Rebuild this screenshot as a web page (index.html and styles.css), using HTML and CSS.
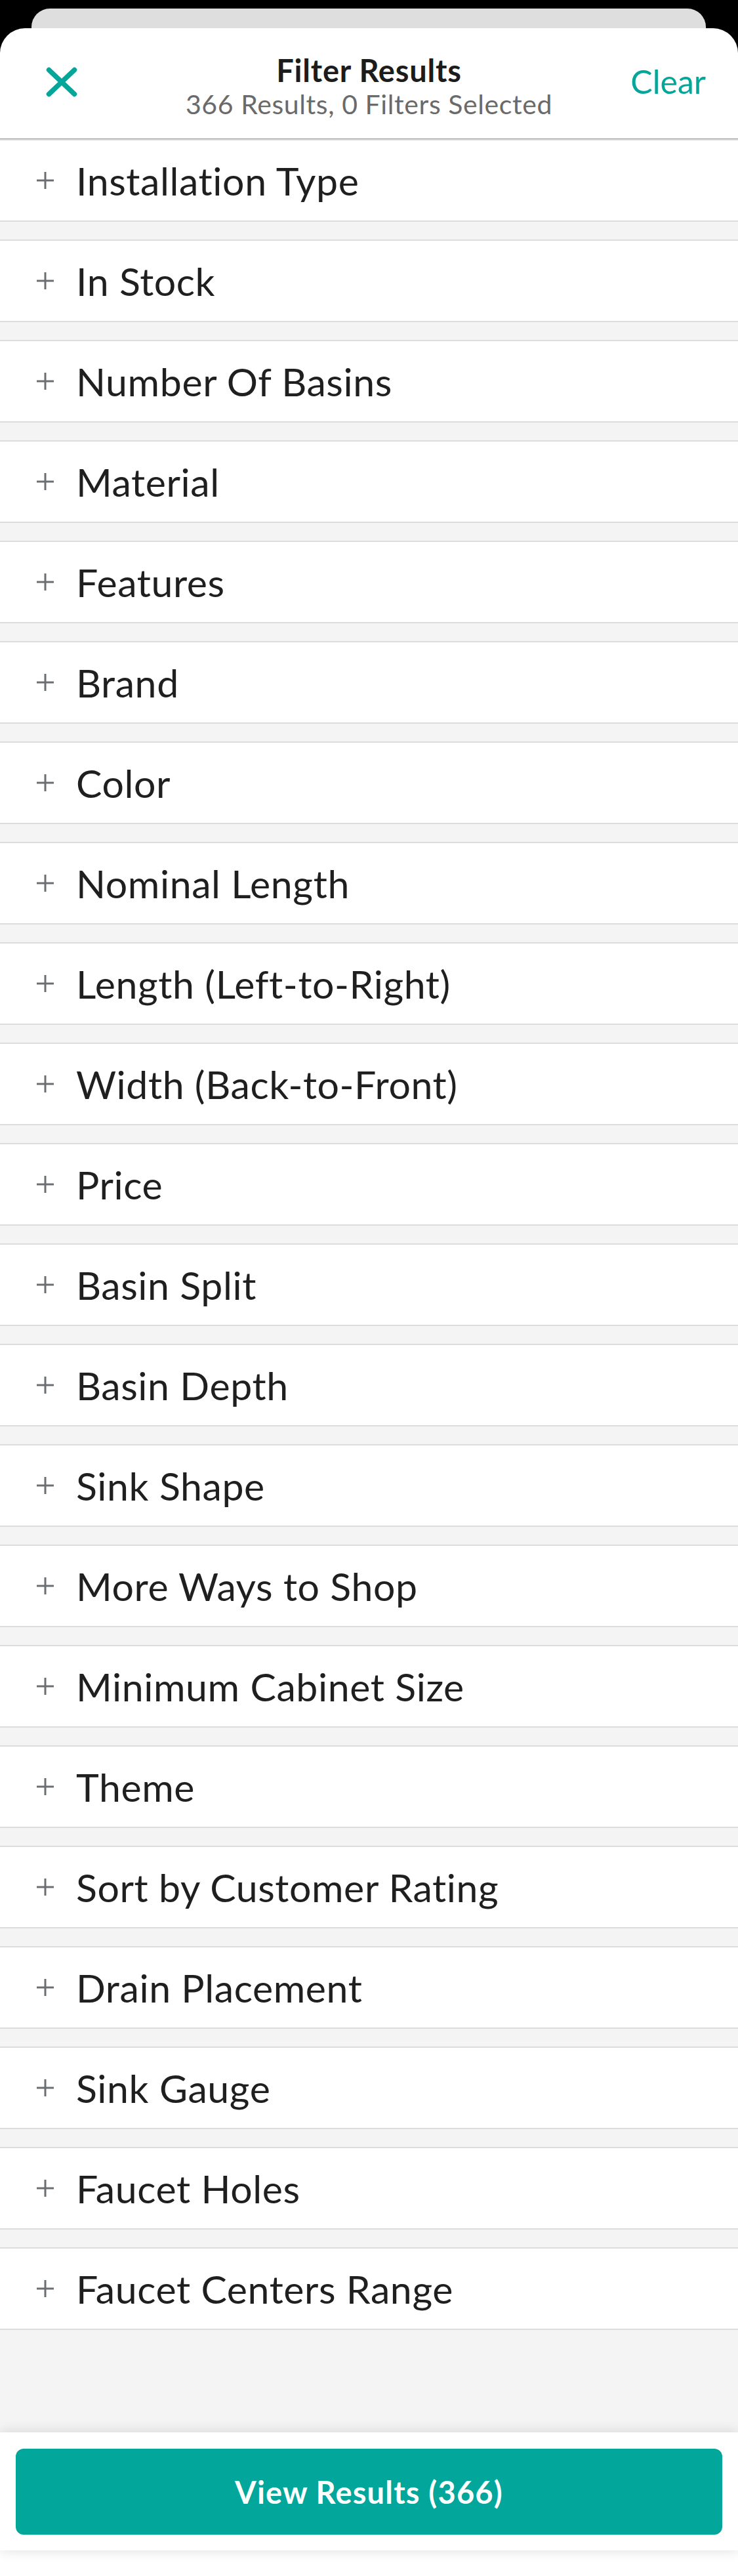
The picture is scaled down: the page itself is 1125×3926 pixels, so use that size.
FILE: index.html
```html
<!DOCTYPE html>
<html lang="en">
<head>
<meta charset="utf-8">
<title>Filter Results</title>
<link rel="stylesheet" href="styles.css">
</head>
<body>
<div class="screen">
  <div class="back-card"></div>
  <div class="sheet">
    <header class="sheet-header">
      <button class="close" aria-label="Close">
        <svg width="48" height="46" viewBox="0 0 48 46"><path d="M4.5 4.5 L43.5 41.5 M43.5 4.5 L4.5 41.5" stroke="#04a69a" stroke-width="7.5" stroke-linecap="round" fill="none"/></svg>
      </button>
      <div class="title-block">
        <div class="title">Filter Results</div>
        <div class="subtitle">366 Results, 0 Filters Selected</div>
      </div>
      <button class="clear">Clear</button>
    </header>
    <ul class="filters">
      <li class="filter"><svg class="plus" width="26" height="26" viewBox="0 0 26 26"><path d="M0 13 H26 M13 0 V26" stroke="#6b6e72" stroke-width="3"/></svg><span>Installation Type</span></li>
      <li class="filter"><svg class="plus" width="26" height="26" viewBox="0 0 26 26"><path d="M0 13 H26 M13 0 V26" stroke="#6b6e72" stroke-width="3"/></svg><span>In Stock</span></li>
      <li class="filter"><svg class="plus" width="26" height="26" viewBox="0 0 26 26"><path d="M0 13 H26 M13 0 V26" stroke="#6b6e72" stroke-width="3"/></svg><span>Number Of Basins</span></li>
      <li class="filter"><svg class="plus" width="26" height="26" viewBox="0 0 26 26"><path d="M0 13 H26 M13 0 V26" stroke="#6b6e72" stroke-width="3"/></svg><span>Material</span></li>
      <li class="filter"><svg class="plus" width="26" height="26" viewBox="0 0 26 26"><path d="M0 13 H26 M13 0 V26" stroke="#6b6e72" stroke-width="3"/></svg><span>Features</span></li>
      <li class="filter"><svg class="plus" width="26" height="26" viewBox="0 0 26 26"><path d="M0 13 H26 M13 0 V26" stroke="#6b6e72" stroke-width="3"/></svg><span>Brand</span></li>
      <li class="filter"><svg class="plus" width="26" height="26" viewBox="0 0 26 26"><path d="M0 13 H26 M13 0 V26" stroke="#6b6e72" stroke-width="3"/></svg><span>Color</span></li>
      <li class="filter"><svg class="plus" width="26" height="26" viewBox="0 0 26 26"><path d="M0 13 H26 M13 0 V26" stroke="#6b6e72" stroke-width="3"/></svg><span>Nominal Length</span></li>
      <li class="filter"><svg class="plus" width="26" height="26" viewBox="0 0 26 26"><path d="M0 13 H26 M13 0 V26" stroke="#6b6e72" stroke-width="3"/></svg><span>Length (Left-to-Right)</span></li>
      <li class="filter"><svg class="plus" width="26" height="26" viewBox="0 0 26 26"><path d="M0 13 H26 M13 0 V26" stroke="#6b6e72" stroke-width="3"/></svg><span>Width (Back-to-Front)</span></li>
      <li class="filter"><svg class="plus" width="26" height="26" viewBox="0 0 26 26"><path d="M0 13 H26 M13 0 V26" stroke="#6b6e72" stroke-width="3"/></svg><span>Price</span></li>
      <li class="filter"><svg class="plus" width="26" height="26" viewBox="0 0 26 26"><path d="M0 13 H26 M13 0 V26" stroke="#6b6e72" stroke-width="3"/></svg><span>Basin Split</span></li>
      <li class="filter"><svg class="plus" width="26" height="26" viewBox="0 0 26 26"><path d="M0 13 H26 M13 0 V26" stroke="#6b6e72" stroke-width="3"/></svg><span>Basin Depth</span></li>
      <li class="filter"><svg class="plus" width="26" height="26" viewBox="0 0 26 26"><path d="M0 13 H26 M13 0 V26" stroke="#6b6e72" stroke-width="3"/></svg><span>Sink Shape</span></li>
      <li class="filter"><svg class="plus" width="26" height="26" viewBox="0 0 26 26"><path d="M0 13 H26 M13 0 V26" stroke="#6b6e72" stroke-width="3"/></svg><span>More Ways to Shop</span></li>
      <li class="filter"><svg class="plus" width="26" height="26" viewBox="0 0 26 26"><path d="M0 13 H26 M13 0 V26" stroke="#6b6e72" stroke-width="3"/></svg><span>Minimum Cabinet Size</span></li>
      <li class="filter"><svg class="plus" width="26" height="26" viewBox="0 0 26 26"><path d="M0 13 H26 M13 0 V26" stroke="#6b6e72" stroke-width="3"/></svg><span>Theme</span></li>
      <li class="filter"><svg class="plus" width="26" height="26" viewBox="0 0 26 26"><path d="M0 13 H26 M13 0 V26" stroke="#6b6e72" stroke-width="3"/></svg><span>Sort by Customer Rating</span></li>
      <li class="filter"><svg class="plus" width="26" height="26" viewBox="0 0 26 26"><path d="M0 13 H26 M13 0 V26" stroke="#6b6e72" stroke-width="3"/></svg><span>Drain Placement</span></li>
      <li class="filter"><svg class="plus" width="26" height="26" viewBox="0 0 26 26"><path d="M0 13 H26 M13 0 V26" stroke="#6b6e72" stroke-width="3"/></svg><span>Sink Gauge</span></li>
      <li class="filter"><svg class="plus" width="26" height="26" viewBox="0 0 26 26"><path d="M0 13 H26 M13 0 V26" stroke="#6b6e72" stroke-width="3"/></svg><span>Faucet Holes</span></li>
      <li class="filter"><svg class="plus" width="26" height="26" viewBox="0 0 26 26"><path d="M0 13 H26 M13 0 V26" stroke="#6b6e72" stroke-width="3"/></svg><span>Faucet Centers Range</span></li>
    </ul>
    <footer class="sheet-footer">
      <button class="view-results">View Results (366)</button>
    </footer>
    <div class="bottom-space"></div>
  </div>
</div>
</body>
</html>
```
FILE: styles.css
```css
* { box-sizing: border-box; }
html, body { margin: 0; padding: 0; }
body {
  background: #000;
  font-family: "Lato", "Liberation Sans", sans-serif;
  color: #222;
}
.screen {
  width: 1125px;
  height: 3926px;
  padding-top: 13px;
  overflow: hidden;
}
.back-card {
  height: 30px;
  margin: 0 49px 0 48px;
  background: #dedede;
  border-radius: 28px 28px 0 0;
}
.sheet {
  background: #fff;
  border-radius: 38px 38px 0 0;
  overflow: hidden;
}
.sheet-header {
  height: 169px;
  display: grid;
  grid-template-columns: 1fr auto 1fr;
  align-items: start;
  padding: 0 49px;
  border-bottom: 1px solid #9c9c9c;
}
.close {
  justify-self: start;
  background: none;
  border: 0;
  padding: 0;
  display: flex;
  margin: 59px 0 0 21px;
}
.title-block {
  text-align: center;
  margin-top: 38px;
}
.title {
  font-weight: 700;
  font-size: 47px;
  line-height: 52px;
  letter-spacing: 0.8px;
  color: #1c1c1c;
}
.subtitle {
  font-size: 41px;
  line-height: 52px;
  letter-spacing: 0.6px;
  color: #6a6a6a;
}
.clear {
  justify-self: end;
  background: none;
  border: 0;
  padding: 0;
  font-family: inherit;
  font-size: 50px;
  line-height: 60px;
  color: #04a69a;
  margin-top: 51px;
}
.filters {
  list-style: none;
  margin: 0;
  padding: 0 0 129px;
  background: #f4f4f4;
}
.filter {
  height: 126px;
  margin-bottom: 27px;
  background: #fff;
  border-top: 2px solid #dcdcdc;
  border-bottom: 2px solid #dcdcdc;
  display: flex;
  align-items: center;
  padding-left: 56px;
  font-size: 59px;
  letter-spacing: 0.6px;
  color: #1f1f1f;
}
.plus {
  flex: none;
  margin-right: 34px;
}
.sheet-footer {
  position: relative;
  background: #fff;
  padding: 25px 24px 24px;
  box-shadow: 0 0 18px rgba(0, 0, 0, 0.14);
}
.view-results {
  display: block;
  width: 100%;
  height: 131px;
  border: 0;
  border-radius: 12px;
  background: #03a69b;
  color: #fff;
  font-family: inherit;
  font-weight: 700;
  font-size: 47px;
  letter-spacing: 1.2px;
}
.bottom-space {
  height: 60px;
  background: #fff;
}
```
